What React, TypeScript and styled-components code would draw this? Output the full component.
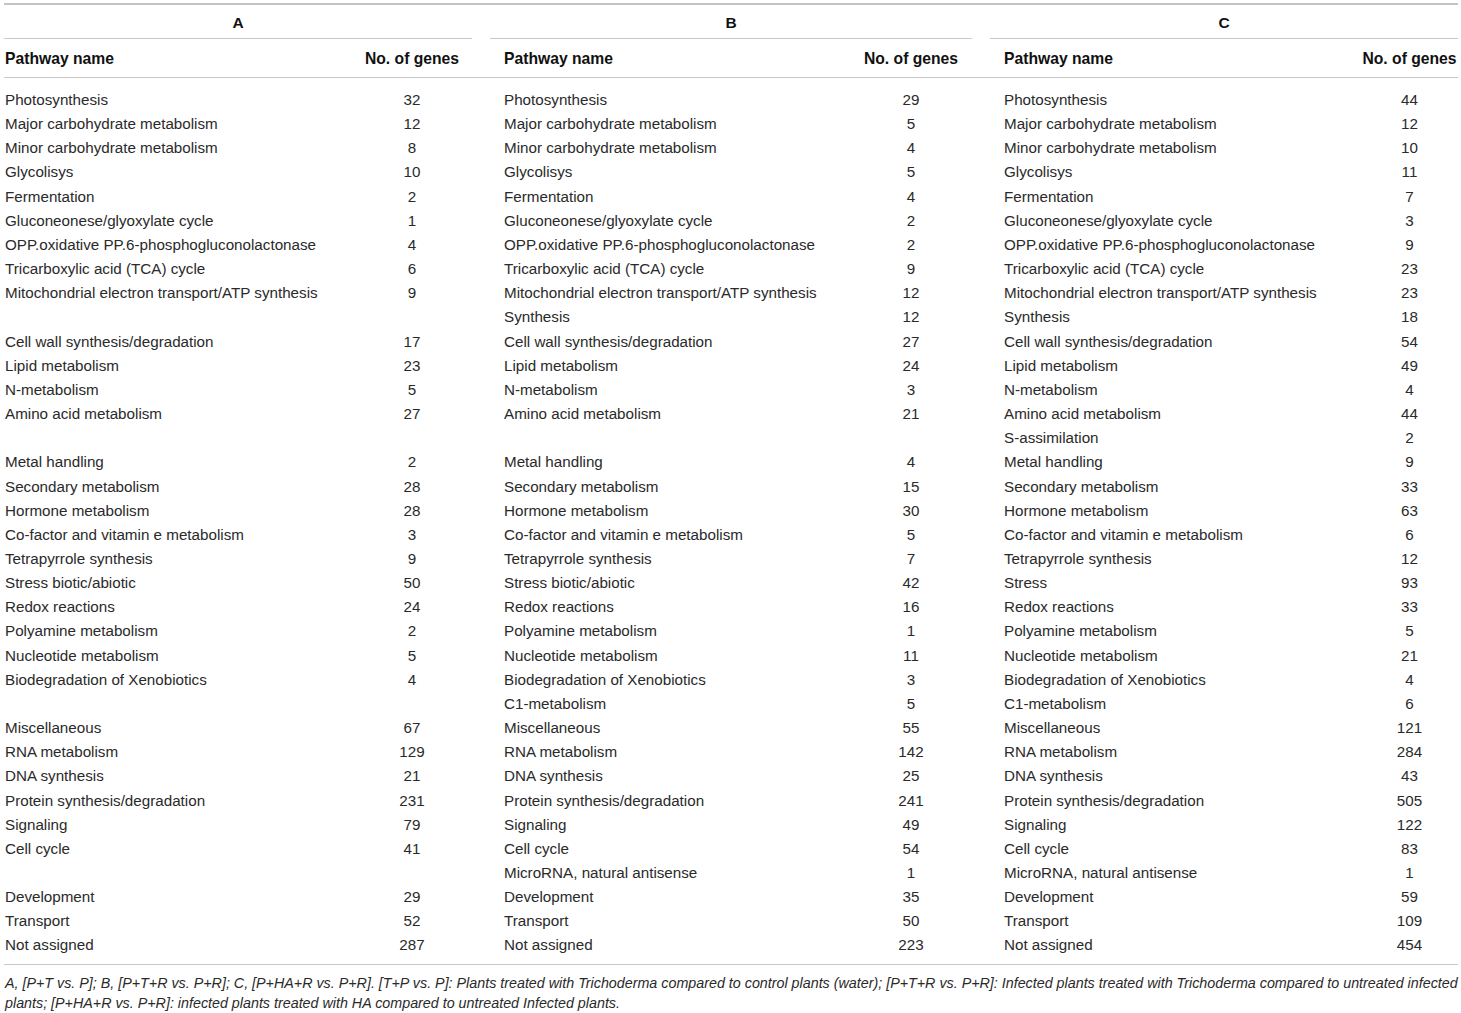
import React from "react";
import styled, { createGlobalStyle } from "styled-components";

const GlobalStyle = createGlobalStyle`
  html, body {
    margin: 0;
    padding: 0;
    background: #ffffff;
  }
  body {
    font-family: "Liberation Sans", Arial, Helvetica, sans-serif;
    color: #2a2a2a;
  }
`;

const COLS = "358px 100px 37px 362px 100px 38px 362px 97px";

const Page = styled.div`
  width: 1454px;
  margin: 3px 0 0 4px;
`;

const Table = styled.div`
  display: flex;
  flex-direction: column;
  border-top: 2px solid #c4c4c4;
  border-bottom: 1.5px solid #c8c8c8;
`;

const RowGrid = styled.div`
  display: grid;
  grid-template-columns: ${COLS};
`;

const GroupRow = styled(RowGrid)`
  padding-top: 9px;
`;

const GroupCell = styled.div<{ $col: number; $ml: number; $mr: number }>`
  grid-column: ${(p) => p.$col} / span 2;
  margin-left: ${(p) => p.$ml}px;
  margin-right: ${(p) => p.$mr}px;
  text-align: center;
  font-weight: 700;
  font-size: 15.5px;
  line-height: 17px;
  color: #111;
  padding-bottom: 7px;
  border-bottom: 1.5px solid #c8c8c8;
`;

const HeadRow = styled(RowGrid)`
  padding: 11px 0 10px;
  border-bottom: 1.5px solid #c8c8c8;
`;

const HeadCell = styled.div<{ $col: number; $pad: number; $center?: boolean }>`
  grid-column: ${(p) => p.$col};
  padding-left: ${(p) => p.$pad}px;
  text-align: ${(p) => (p.$center ? "center" : "left")};
  font-weight: 700;
  font-size: 15.7px;
  line-height: 17px;
  color: #111;
  white-space: nowrap;
`;

const Body = styled(RowGrid)`
  padding: 10px 0 6.5px;
  grid-auto-rows: 24.16px;
`;

const NameCell = styled.div<{ $col: number; $pad: number }>`
  grid-column: ${(p) => p.$col};
  padding-left: ${(p) => p.$pad}px;
  font-size: 15.2px;
  line-height: 24.16px;
  color: #2a2a2a;
  white-space: nowrap;
`;

const NumCell = styled.div<{ $col: number }>`
  grid-column: ${(p) => p.$col};
  text-align: center;
  font-size: 15.2px;
  line-height: 24.16px;
  color: #2a2a2a;
`;

const Footnote = styled.p`
  margin: 8px 0 0 1px;
  font-style: italic;
  font-size: 14.3px;
  line-height: 20px;
  color: #2a2a2a;
  white-space: nowrap;
`;

type Row = [string, string, string, string, string, string];

const rows: Row[] = [
  ["Photosynthesis", "32", "Photosynthesis", "29", "Photosynthesis", "44"],
  ["Major carbohydrate metabolism", "12", "Major carbohydrate metabolism", "5", "Major carbohydrate metabolism", "12"],
  ["Minor carbohydrate metabolism", "8", "Minor carbohydrate metabolism", "4", "Minor carbohydrate metabolism", "10"],
  ["Glycolisys", "10", "Glycolisys", "5", "Glycolisys", "11"],
  ["Fermentation", "2", "Fermentation", "4", "Fermentation", "7"],
  ["Gluconeonese/glyoxylate cycle", "1", "Gluconeonese/glyoxylate cycle", "2", "Gluconeonese/glyoxylate cycle", "3"],
  ["OPP.oxidative PP.6-phosphogluconolactonase", "4", "OPP.oxidative PP.6-phosphogluconolactonase", "2", "OPP.oxidative PP.6-phosphogluconolactonase", "9"],
  ["Tricarboxylic acid (TCA) cycle", "6", "Tricarboxylic acid (TCA) cycle", "9", "Tricarboxylic acid (TCA) cycle", "23"],
  ["Mitochondrial electron transport/ATP synthesis", "9", "Mitochondrial electron transport/ATP synthesis", "12", "Mitochondrial electron transport/ATP synthesis", "23"],
  ["", "", "Synthesis", "12", "Synthesis", "18"],
  ["Cell wall synthesis/degradation", "17", "Cell wall synthesis/degradation", "27", "Cell wall synthesis/degradation", "54"],
  ["Lipid metabolism", "23", "Lipid metabolism", "24", "Lipid metabolism", "49"],
  ["N-metabolism", "5", "N-metabolism", "3", "N-metabolism", "4"],
  ["Amino acid metabolism", "27", "Amino acid metabolism", "21", "Amino acid metabolism", "44"],
  ["", "", "", "", "S-assimilation", "2"],
  ["Metal handling", "2", "Metal handling", "4", "Metal handling", "9"],
  ["Secondary metabolism", "28", "Secondary metabolism", "15", "Secondary metabolism", "33"],
  ["Hormone metabolism", "28", "Hormone metabolism", "30", "Hormone metabolism", "63"],
  ["Co-factor and vitamin e metabolism", "3", "Co-factor and vitamin e metabolism", "5", "Co-factor and vitamin e metabolism", "6"],
  ["Tetrapyrrole synthesis", "9", "Tetrapyrrole synthesis", "7", "Tetrapyrrole synthesis", "12"],
  ["Stress biotic/abiotic", "50", "Stress biotic/abiotic", "42", "Stress", "93"],
  ["Redox reactions", "24", "Redox reactions", "16", "Redox reactions", "33"],
  ["Polyamine metabolism", "2", "Polyamine metabolism", "1", "Polyamine metabolism", "5"],
  ["Nucleotide metabolism", "5", "Nucleotide metabolism", "11", "Nucleotide metabolism", "21"],
  ["Biodegradation of Xenobiotics", "4", "Biodegradation of Xenobiotics", "3", "Biodegradation of Xenobiotics", "4"],
  ["", "", "C1-metabolism", "5", "C1-metabolism", "6"],
  ["Miscellaneous", "67", "Miscellaneous", "55", "Miscellaneous", "121"],
  ["RNA metabolism", "129", "RNA metabolism", "142", "RNA metabolism", "284"],
  ["DNA synthesis", "21", "DNA synthesis", "25", "DNA synthesis", "43"],
  ["Protein synthesis/degradation", "231", "Protein synthesis/degradation", "241", "Protein synthesis/degradation", "505"],
  ["Signaling", "79", "Signaling", "49", "Signaling", "122"],
  ["Cell cycle", "41", "Cell cycle", "54", "Cell cycle", "83"],
  ["", "", "MicroRNA, natural antisense", "1", "MicroRNA, natural antisense", "1"],
  ["Development", "29", "Development", "35", "Development", "59"],
  ["Transport", "52", "Transport", "50", "Transport", "109"],
  ["Not assigned", "287", "Not assigned", "223", "Not assigned", "454"],
];

const groups = [
  { label: "A", col: 1, ml: 0, mr: -10, pad: 1 },
  { label: "B", col: 4, ml: -9, mr: -11, pad: 5 },
  { label: "C", col: 7, ml: -9, mr: 0, pad: 5 },
];

export default function App() {
  return (
    <>
      <GlobalStyle />
      <Page>
        <Table>
          <GroupRow>
            {groups.map((g) => (
              <GroupCell key={g.label} $col={g.col} $ml={g.ml} $mr={g.mr}>
                {g.label}
              </GroupCell>
            ))}
          </GroupRow>
          <HeadRow>
            {groups.map((g) => (
              <React.Fragment key={g.label}>
                <HeadCell $col={g.col} $pad={g.pad}>
                  Pathway name
                </HeadCell>
                <HeadCell $col={g.col + 1} $pad={0} $center>
                  No. of genes
                </HeadCell>
              </React.Fragment>
            ))}
          </HeadRow>
          <Body>
            {rows.map((r, i) =>
              groups.map((g, gi) => (
                <React.Fragment key={`${i}-${g.label}`}>
                  <NameCell $col={g.col} $pad={g.pad} style={{ gridRow: i + 1 }}>
                    {r[gi * 2]}
                  </NameCell>
                  <NumCell $col={g.col + 1} style={{ gridRow: i + 1 }}>
                    {r[gi * 2 + 1]}
                  </NumCell>
                </React.Fragment>
              ))
            )}
          </Body>
        </Table>
        <Footnote>
          A, [P+T vs. P]; B, [P+T+R vs. P+R]; C, [P+HA+R vs. P+R]. [T+P vs. P]: Plants treated with Trichoderma compared to control plants (water); [P+T+R vs. P+R]: Infected plants treated with Trichoderma compared to untreated infected
          <br />
          plants; [P+HA+R vs. P+R]: infected plants treated with HA compared to untreated Infected plants.
        </Footnote>
      </Page>
    </>
  );
}
